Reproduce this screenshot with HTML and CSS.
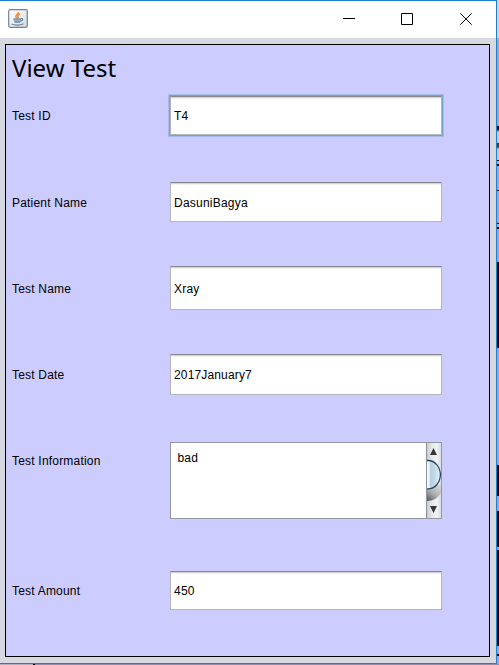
FILE: index.html
```html
<!DOCTYPE html>
<html lang="en">
<head>
<meta charset="utf-8">
<title>View Test</title>
<link rel="stylesheet" href="styles.css">
</head>
<body>
<div class="window">
  <header class="titlebar">
    <svg class="app-icon" width="20" height="20" viewBox="0 0 20 20">
      <defs>
        <linearGradient id="tile" x1="0" y1="0" x2="1" y2="1">
          <stop offset="0" stop-color="#fff"/><stop offset="1" stop-color="#d5dade"/>
        </linearGradient>
      </defs>
      <rect x=".7" y=".7" width="18.6" height="17.6" rx="1.5" fill="url(#tile)" stroke="#6d8598" stroke-width="1.2"/>
      <path d="M10.500 3c.5 2-3.500 2.800-2.500 5l1.300 1.400M12 5c-3 1.500-2.500 2.300-1.500 4.200" fill="none" stroke="#ed8b3c" stroke-width="1.500"/>
      <path d="M5.500 9.500h7.500c0 3-1 4.500-2 4.500H7.500c-1.500-1-2-2.500-2-4.500z" fill="#9db0c0"/>
      <path d="M5.500 10h7.500M13 9.500c2.500-.5 2.500 2-.8 3M6.500 13h5.500M3.500 15c3 1.500 9 1.500 12-.3" fill="none" stroke="#6c879e" stroke-width="1.100"/>
    </svg>
    <div class="controls">
      <svg width="12" height="12" viewBox="0 0 12 12"><path d="M0 5.500h12"/></svg>
      <svg width="12" height="12" viewBox="0 0 12 12"><path d="M.5.5h11v11H.5z"/></svg>
      <svg width="12" height="12" viewBox="0 0 12 12"><path d="M.3.3l11.400 11.400M11.700.3L.3 11.700"/></svg>
    </div>
  </header>
  <main class="panel">
    <h1>View Test</h1>
    <div class="form">
      <span class="label">Test ID</span><div class="field focused">T4</div>
      <span class="label low">Patient Name</span><div class="field low">DasuniBagya</div>
      <span class="label lowest">Test Name</span><div class="field tall low">Xray</div>
      <span class="label low">Test Date</span><div class="field date">2017January7</div>
      <span class="label high">Test Information</span>
      <div class="textarea">
        <div class="content">bad</div>
        <svg class="scrollbar" viewBox="0 0 14 75">
          <defs>
            <linearGradient id="track"><stop offset="0" stop-color="#c8cbd0"/><stop offset=".3" stop-color="#e2e4e8"/><stop offset=".7" stop-color="#f2f3f5"/><stop offset="1" stop-color="#d8dade"/></linearGradient>
            <linearGradient id="thumb"><stop offset="0" stop-color="#f4fbff"/><stop offset=".18" stop-color="#e2f0f8"/><stop offset=".25" stop-color="#b3cede"/><stop offset=".6" stop-color="#c3dbe9"/><stop offset="1" stop-color="#e5f5ff"/></linearGradient>
            <linearGradient id="shade" x1="0" y1="1" x2=".7" y2="0"><stop offset="0" stop-color="#555"/><stop offset=".5" stop-color="#aaacb0"/><stop offset="1" stop-color="#d0d2d6"/></linearGradient>
          </defs>
          <path d="M0 0h14v75H0z" fill="url(#track)"/>
          <path d="M0 42h14v8c-3 5-8 8-14 8z" fill="url(#shade)"/>
          <path d="M0 17.500h1a12.400 14.200 0 0 1 0 28.400H0z" fill="url(#thumb)"/>
          <path d="M0 17.500h1a12.400 14.200 0 0 1 0 28.400H0" fill="none" stroke="#29465b" stroke-width="1.300"/>
          <path d="M3 12l3.500-7L10 12zM3 63l3.500 7L10 63z" fill="#343638"/>
        </svg>
      </div>
      <span class="label">Test Amount</span><div class="field short">450</div>
    </div>
  </main>
</div>
<div class="backdrop"></div>
<div class="shadow"></div>
</body>
</html>
```
FILE: styles.css
```css
* { box-sizing: border-box; }
body {
  margin: 0;
  width: 499px;
  height: 665px;
  overflow: hidden;
  display: grid;
  grid-template: 664px 1px / 497px 2px;
  font: 12px/16px "Liberation Sans", Arial, sans-serif;
  color: #000;
}
.window {
  display: flex;
  flex-direction: column;
  border: solid #1b80d0;
  border-width: 1px 1px 1px 0;
  background: #d6d9df;
}
.titlebar {
  height: 37px;
  flex: none;
  display: flex;
  justify-content: space-between;
  background: #fff;
  padding: 8px 24px 0 8px;
}
.controls {
  display: flex;
  gap: 46px;
  padding-top: 4px;
}
.controls svg:last-child { margin-left: 1px; }
.controls svg {
  fill: none;
  stroke: #000;
  stroke-width: 1;
}
.panel {
  margin: 6px 6px 6px 5px;
  height: 613px;
  border: 1px solid #000;
  background: #ccf;
  padding: 8px 0 0 6px;
}
h1 {
  margin: 0;
  height: 43px;
  font: 24px/30px "Noto Sans", "DejaVu Sans", sans-serif;
}
.form {
  display: grid;
  grid-template-columns: 158px 272px;
  grid-template-rows: 86px 84px 88px 88px 129px 39px;
}
.label {
  letter-spacing: .2px;
  padding-top: 12px;
}
.label.high { padding-top: 11px; }
.label.low { padding-top: 13px; }
.label.lowest { padding-top: 15px; }
.field {
  height: 40px;
  display: flex;
  align-items: center;
  padding-left: 3px;
  background: #fff;
  border: 1px solid #b6b6ba;
  border-top-color: #86878d;
  box-shadow: inset 0 1px #d4d4d4, inset 0 2px #f1f1f1;
  letter-spacing: .22px;
}
.field.focused {
  height: 39px;
  box-shadow: inset 0 1px #d4d4d4, inset 0 2px #f1f1f1, 0 0 0 1px #73a4d1, 0 0 0 2px #a3bce9;
}
.field.low { padding-top: 2px; }
.field.tall { height: 44px; }
.field.date { height: 41px; letter-spacing: .15px; }
.field.short { height: 39px; }
.textarea {
  height: 77px;
  display: flex;
  background: #fff;
  border: 1px solid #9297a1;
}
.content {
  width: 255px;
  padding: 7px 0 0 6.500px;
  letter-spacing: .15px;
}
.scrollbar {
  width: 15px;
  height: 75px;
  border-left: 1px solid #8d9198;
}
.backdrop {
  background: linear-gradient(#d5d5d5 0 38px, #a7a8ad 38px 126px, #000 126px 129px, #c8c8c8 132px 143px, #553517 143px 147px, #c8c8c8 149px 160px, #000 160px 161px, #a9b4cc 161px 164px, #000 164px 166px, #a3a4d2 166px 190px, #000 190px 191px, #a3a4d2 191px 223px, #000 223px 224px, #a3b4c4 224px 227px, #000 227px 229px, #a0a1d0 229px 262px, #000 262px 348px, #a0a1d0 348px 465px, #000 465px 496px, #a0a1d0 496px 511px, #000 511px 547px, #a0a1d0 547px 550px, #000 550px 646px, #a0a1d0 646px 654px, #000 654px 656px, #a0a1d0 656px);
}
.shadow {
  grid-column: 1 / 3;
  background: linear-gradient(90deg, #aeb1c4 0 33px, #000 33px 35px, #8f8bb2 35px);
}
```
